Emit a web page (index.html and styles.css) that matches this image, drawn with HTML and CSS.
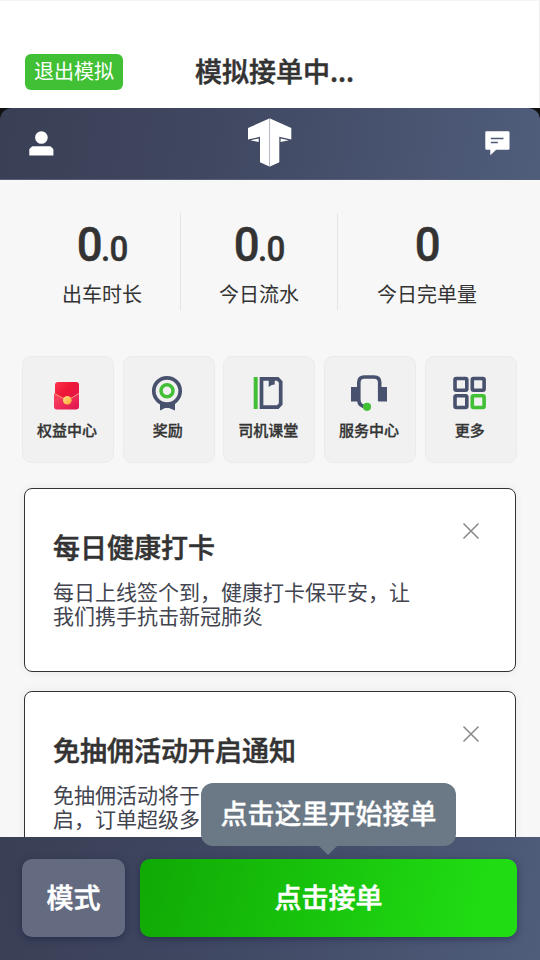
FILE: index.html
```html
<!DOCTYPE html>
<html lang="zh-CN">
<head>
<meta charset="utf-8">
<title>模拟接单中</title>
<link rel="stylesheet" href="styles.css">
</head>
<body>
<div class="app">
  <header class="sim-bar">
    <button class="exit">退出模拟</button>
    <h1 class="sim-title">模拟接单中...</h1>
  </header>
  <div class="nav-wrap">
    <nav class="nav">
      <svg class="nav-user" width="26" height="26" viewBox="0 0 26 26"><circle cx="12.400" cy="6.500" r="6.300"/><path d="M.3 24.600v-6.100q.3-1.500 3.200-3.200h17.700q2.900 1.700 3.200 3.200v6.100z"/></svg>
      <svg class="nav-logo" width="46" height="50" viewBox="0 0 46 50">
        <path d="M1 10 22.300.400V48.400L13 44.300V18.700L1 21.600z"/><path d="M44.300 10 23 .400V48.400l9.300-4.100V18.700l12 2.900z"/>
        <path class="shade" d="M22.300.400h.8v48h-.8z"/>
        <path d="M3.500 22.300l8.200-1.800v3.600zM41.800 22.300l-8.200-1.800v3.600z"/>
      </svg>
      <svg class="nav-msg" width="26" height="26" viewBox="0 0 26 26"><path d="M1.500.3h21.800q1.200 0 1.200 1.200v16q0 1.200-1.200 1.200H11.200L5.300 24.300v-5.600H1.500Q.3 18.700.3 17.500v-16Q.3.300 1.500.300z"/><path class="lines" d="M5.800 7.500h12.700M5.800 11.500h7"/></svg>
    </nav>
  </div>

  <main class="content">
    <section class="stats">
      <div class="stat"><div class="num">0<small>.0</small></div><div class="stat-label">出车时长</div></div>
      <div class="stat"><div class="num">0<small>.0</small></div><div class="stat-label">今日流水</div></div>
      <div class="stat"><div class="num">0</div><div class="stat-label">今日完单量</div></div>
    </section>

    <section class="tiles">
      <div class="tile">
        <svg width="40" height="40" viewBox="0 0 40 40">
          <defs>
            <linearGradient id="red" x1="0" y1="0" x2="1" y2="1"><stop offset="0" stop-color="#ff3349"/><stop offset=".4" stop-color="#ed1636"/><stop offset="1" stop-color="#df1556"/></linearGradient>
            <linearGradient id="pink" x1="0" y1="0" x2="1" y2="1"><stop offset="0" stop-color="#ff4a60"/><stop offset="1" stop-color="#df1250"/></linearGradient>
            <linearGradient id="gold" x1="0" y1="0" x2="1" y2="1"><stop offset="0" stop-color="#ffe083"/><stop offset="1" stop-color="#ffa62e"/></linearGradient>
          </defs>
          <rect x="7" y="9" width="24" height="26" rx="3" fill="url(#red)"/>
          <path d="M6 20.500 19.300 27.500 31 20.500V33.500q0 3-3 3H9q-3 0-3-3z" fill="url(#pink)"/>
          <path d="M6.300 20.500 19.300 27.500 31 20.500" fill="none" stroke="#ff9a78"/>
          <circle cx="19.300" cy="27.200" r="4.300" fill="url(#gold)"/>
        </svg>
        <span>权益中心</span>
      </div>
      <div class="tile">
        <svg width="40" height="40" viewBox="0 0 40 40">
          <path d="M12 27v10.500l5-2.400h4l6 2.400V27z" fill="#48516d"/>
          <circle cx="19" cy="18" r="13.200" fill="#f1f1f1" stroke="#48516d" stroke-width="3.700"/>
          <circle cx="19" cy="17.800" r="6" fill="none" stroke="#41bf35" stroke-width="3.500"/>
        </svg>
        <span>奖励</span>
      </div>
      <div class="tile">
        <svg width="40" height="40" viewBox="0 0 40 40">
          <path d="M4.700 4h4v32H4.700z" fill="#41bf35"/>
          <path d="M12.500 5.800H28.700l3 3.200v22L28.700 34.200H12.500z" fill="none" stroke="#48516d" stroke-width="3.700"/>
          <path d="M19.700 5.500h6v6l-3 .5-3 2z" fill="#48516d"/>
        </svg>
        <span>司机课堂</span>
      </div>
      <div class="tile">
        <svg width="40" height="40" viewBox="0 0 40 40">
          <path d="M1 14h8v14.500H1zM28.500 14h8.500v14.500h-8.500z" fill="#48516d"/>
          <path d="M17 33.700q-8.200 0-8.200-7V9.500q0-5.500 5.500-5.500h9.700Q29.700 4 29.700 9.500v18.500" fill="none" stroke="#48516d" stroke-width="3.600"/>
          <circle cx="17" cy="33.800" r="4.100" fill="#41bf35"/>
        </svg>
        <span>服务中心</span>
      </div>
      <div class="tile">
        <svg width="40" height="40" viewBox="0 0 40 40" fill="none" stroke="#48516d" stroke-width="3.600">
          <rect x="5" y="5.500" width="11.800" height="11.800" rx="1.200"/>
          <rect x="22.300" y="5.500" width="11.800" height="11.800" rx="1.200"/>
          <rect x="5" y="22.700" width="11.800" height="11.800" rx="1.200"/>
          <rect x="22.300" y="22.700" width="11.800" height="11.800" rx="1.200" stroke="#41bf35"/>
        </svg>
        <span>更多</span>
      </div>
    </section>

    <section class="cards">
      <article class="card">
        <svg class="close" width="18" height="18" viewBox="0 0 18 18"><path d="M1.500 1.500l15 15M16.500 1.500l-15 15"/></svg>
        <h2>每日健康打卡</h2>
        <p>每日上线签个到，健康打卡保平安，让<br>我们携手抗击新冠肺炎</p>
      </article>
      <article class="card">
        <svg class="close" width="18" height="18" viewBox="0 0 18 18"><path d="M1.500 1.500l15 15M16.500 1.500l-15 15"/></svg>
        <h2>免抽佣活动开启通知</h2>
        <p>免抽佣活动将于<br>启，订单超级多</p>
      </article>
    </section>
  </main>

  <footer class="bottom">
    <button class="mode">模式</button>
    <button class="go">点击接单</button>
    <div class="tip">点击这里开始接单</div>
  </footer>
</div>
</body>
</html>
```

FILE: styles.css
```css
* { box-sizing: border-box; }
body {
  margin: 0;
  font-family: "Noto Sans CJK SC", sans-serif;
  color: #333;
}
h1, h2, p { margin: 0; }
button { border: 0; padding: 0; font-family: inherit; color: #fff; }
svg { display: block; }

.app {
  width: 540px;
  height: 960px;
  display: flex;
  flex-direction: column;
  overflow: hidden;
  background: #f7f7f7;
}

.sim-bar {
  flex: none;
  height: 108px;
  padding: 53px 25px 0;
  display: flex;
  background: #fff;
  border-top: 1px solid #f4f4f4;
  border-right: 1px solid #ededed;
}
.exit {
  width: 98px;
  height: 36px;
  padding-bottom: 2px;
  border-radius: 6px;
  background: #41bf35;
  font-size: 20px;
  line-height: 34px;
}
.sim-title {
  margin-left: 72px;
  font-size: 27px;
  line-height: 34px;
  font-weight: 500;
  -webkit-text-stroke: .5px;
}

.nav-wrap { flex: none; background: #111; }
.nav {
  height: 72px;
  padding: 0 29px;
  display: flex;
  align-items: center;
  justify-content: space-between;
  border-radius: 12px 12px 0 0;
  background: linear-gradient(100deg, #393f54, #3f465f 35%, #4f5d7b);
  border-bottom: 1px solid #565f78;
}
.nav svg { fill: #fff; }
.nav-logo { margin-top: -2px; }
.nav .shade { fill: #d4d6df; }
.nav .lines { stroke: #4c5774; stroke-width: 1.5; fill: none; }

.content {
  flex: 1;
  min-height: 0;
  overflow: hidden;
}
.stats {
  display: grid;
  grid-template-columns: 157px 157px 178px;
  margin: 33px 24px 0;
  height: 97px;
}
.stat { text-align: center; border-right: 1px solid #e5e5e5; }
.stat:last-child { border-right: 0; }
.num {
  height: 64px;
  font: 500 48px/64px Roboto, sans-serif;
  letter-spacing: -1.5px;
  transform: scaleX(.95);
  -webkit-text-stroke: .4px;
}
.num small { font-size: 35px; letter-spacing: -1px; }
.stat-label { font-size: 20px; line-height: 33px; }

.tiles {
  display: grid;
  grid-template-columns: repeat(5, 92px);
  column-gap: 8.7px;
  margin: 46px 23px 0 22px;
}
.tile {
  height: 107px;
  padding-top: 16px;
  border: 1px solid #ebebeb;
  border-radius: 9px;
  background: #f1f1f1;
  display: flex;
  flex-direction: column;
  align-items: center;
}
.tile span {
  margin: 6px 2px 0 0;
  font-size: 15px;
  line-height: 22px;
  font-weight: 500;
  -webkit-text-stroke: .3px;
}
.tile svg { margin-left: -1px; }

.cards {
  margin: 25px 24px 0;
  display: grid;
  gap: 19px;
}
.card {
  position: relative;
  height: 184px;
  padding: 40px 29px 0 28px;
  border: 1px solid #333;
  border-radius: 8px;
  background: #fff;
  box-shadow: 0 0 10px rgba(0, 0, 0, .06);
}
.card h2 {
  font-size: 27px;
  line-height: 36px;
  font-weight: 500;
  -webkit-text-stroke: .5px;
}
.card p {
  margin-top: 14px;
  font-size: 21px;
  line-height: 24px;
  color: #42444f;
}
.close {
  position: absolute;
  top: 33px;
  right: 35px;
  fill: none;
  stroke: #888;
  stroke-width: 1.5;
}

.bottom {
  position: relative;
  flex: none;
  height: 123px;
  padding: 22px 23px 0 22px;
  display: flex;
  gap: 15px;
  background: linear-gradient(105deg, #393f54, #3f4761 40%, #4f5d7b);
}
.bottom button {
  height: 78px;
  padding-bottom: 2px;
  border-radius: 10px;
  font-size: 27px;
  font-weight: 500;
  line-height: 76px;
  -webkit-text-stroke: .5px;
  box-shadow: 0 2px 7px rgba(20, 26, 65, .5);
}
.bottom .mode { width: 103px; background: #646b80; }
.bottom .go { flex: 1; background: linear-gradient(105deg, #10a905, #20dd13 90%); }
.tip {
  position: absolute;
  left: 201px;
  top: -54px;
  width: 255px;
  height: 63px;
  border-radius: 12px;
  background: #6b7986;
  color: #fff;
  font-size: 27px;
  font-weight: 500;
  line-height: 60px;
  text-align: center;
  -webkit-text-stroke: .3px;
}
.tip::after {
  content: "";
  position: absolute;
  left: 118px;
  top: 63px;
  border: 9px solid transparent;
  border-top-color: #6b7986;
  border-bottom: 0;
}
```
